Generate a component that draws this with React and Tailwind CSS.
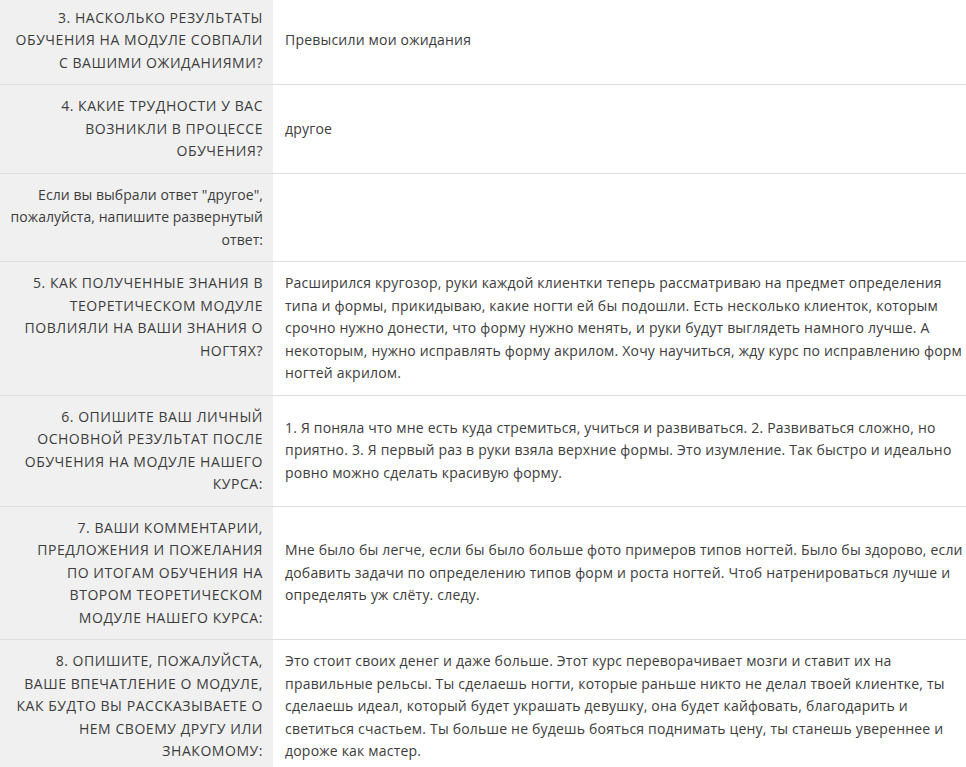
const ROWS = [
  {
    q: ["3. НАСКОЛЬКО РЕЗУЛЬТАТЫ", "ОБУЧЕНИЯ НА МОДУЛЕ СОВПАЛИ", "С ВАШИМИ ОЖИДАНИЯМИ?"],
    a: ["Превысили мои ожидания"],
  },
  {
    q: ["4. КАКИЕ ТРУДНОСТИ У ВАС", "ВОЗНИКЛИ В ПРОЦЕССЕ", "ОБУЧЕНИЯ?"],
    a: ["другое"],
  },
  {
    q: ["Если вы выбрали ответ \"другое\",", "пожалуйста, напишите развернутый", "ответ:"],
    a: [],
    plain: true,
  },
  {
    q: ["5. КАК ПОЛУЧЕННЫЕ ЗНАНИЯ В", "ТЕОРЕТИЧЕСКОМ МОДУЛЕ", "ПОВЛИЯЛИ НА ВАШИ ЗНАНИЯ О", "НОГТЯХ?"],
    a: [
      "Расширился кругозор, руки каждой клиентки теперь рассматриваю на предмет определения",
      "типа и формы, прикидываю, какие ногти ей бы подошли. Есть несколько клиенток, которым",
      "срочно нужно донести, что форму нужно менять, и руки будут выглядеть намного лучше. А",
      "некоторым, нужно исправлять форму акрилом. Хочу научиться, жду курс по исправлению форм",
      "ногтей акрилом.",
    ],
  },
  {
    q: ["6. ОПИШИТЕ ВАШ ЛИЧНЫЙ", "ОСНОВНОЙ РЕЗУЛЬТАТ ПОСЛЕ", "ОБУЧЕНИЯ НА МОДУЛЕ НАШЕГО", "КУРСА:"],
    a: [
      "1. Я поняла что мне есть куда стремиться, учиться и развиваться. 2. Развиваться сложно, но",
      "приятно. 3. Я первый раз в руки взяла верхние формы. Это изумление. Так быстро и идеально",
      "ровно можно сделать красивую форму.",
    ],
  },
  {
    q: [
      "7. ВАШИ КОММЕНТАРИИ,",
      "ПРЕДЛОЖЕНИЯ И ПОЖЕЛАНИЯ",
      "ПО ИТОГАМ ОБУЧЕНИЯ НА",
      "ВТОРОМ ТЕОРЕТИЧЕСКОМ",
      "МОДУЛЕ НАШЕГО КУРСА:",
    ],
    a: [
      "Мне было бы легче, если бы было больше фото примеров типов ногтей. Было бы здорово, если",
      "добавить задачи по определению типов форм и роста ногтей. Чтоб натренироваться лучше и",
      "определять уж слёту. следу.",
    ],
  },
  {
    q: [
      "8. ОПИШИТЕ, ПОЖАЛУЙСТА,",
      "ВАШЕ ВПЕЧАТЛЕНИЕ О МОДУЛЕ,",
      "КАК БУДТО ВЫ РАССКАЗЫВАЕТЕ О",
      "НЕМ СВОЕМУ ДРУГУ ИЛИ",
      "ЗНАКОМОМУ:",
    ],
    a: [
      "Это стоит своих денег и даже больше. Этот курс переворачивает мозги и ставит их на",
      "правильные рельсы. Ты сделаешь ногти, которые раньше никто не делал твоей клиентке, ты",
      "сделаешь идеал, который будет украшать девушку, она будет кайфовать, благодарить и",
      "светиться счастьем. Ты больше не будешь бояться поднимать цену, ты станешь увереннее и",
      "дороже как мастер.",
    ],
  },
];

export default function App() {
  return (
    <div className="w-[966px] h-[767px] overflow-hidden bg-white text-[#3c3c3c] font-['Open_Sans',sans-serif] text-[14px] leading-[22.5px]">
      <div className="-mt-[3.5px]">
        {ROWS.map((row, i) => (
          <div key={i} className="flex border-b border-[#dddddd]">
            <div
              className={`w-[273px] shrink-0 bg-[#f0f0f0] py-[10px] pr-[10px] text-right ${
                row.plain ? "tracking-[0.05px]" : "tracking-[0.55px]"
              }`}
            >
              {row.q.map((l, j) => (
                <div key={j} className="whitespace-nowrap">{l}</div>
              ))}
            </div>
            <div className="flex-1 flex flex-col justify-center pl-[12px] py-[10px] tracking-[0.2px]">
              {row.a.map((l, j) => (
                <div key={j} className="whitespace-nowrap">{l}</div>
              ))}
            </div>
          </div>
        ))}
      </div>
    </div>
  );
}
